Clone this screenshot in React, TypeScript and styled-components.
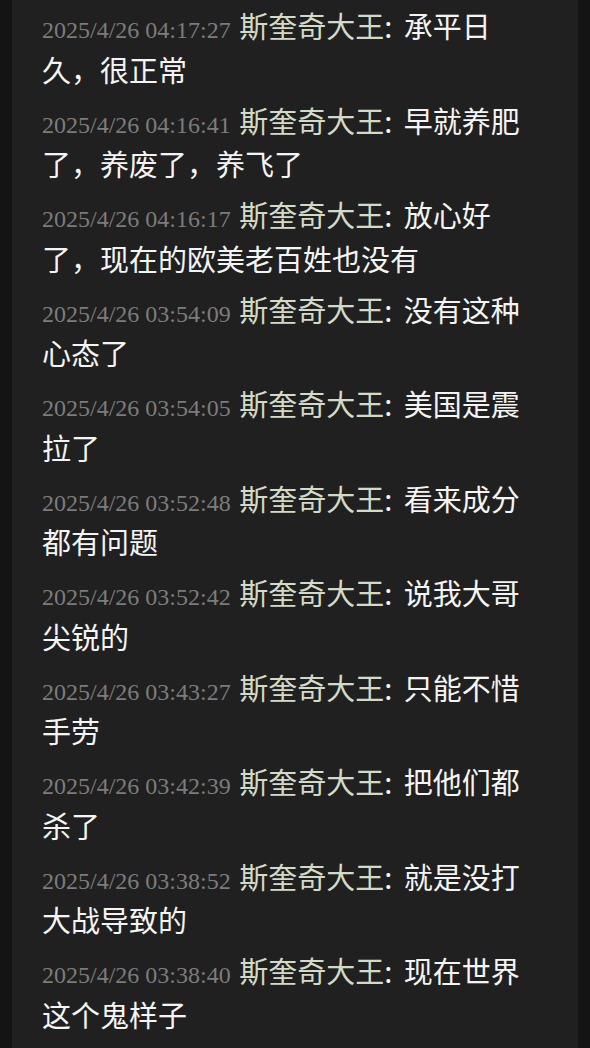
import React from "react";
import styled, { createGlobalStyle } from "styled-components";

const Global = createGlobalStyle`
  html, body { margin: 0; padding: 0; background: #141414; }
  body { overflow: hidden; }
`;

const Page = styled.div`
  display: flex;
  justify-content: center;
  min-height: 1048px;
  background: #141414;
`;

const Panel = styled.div`
  width: 566px;
  box-sizing: border-box;
  background: #202020;
  padding: 4px 38px 0 30px;
  display: flex;
  flex-direction: column;
  gap: 7.5px;
`;

const Entry = styled.div`
  font-family: "Noto Sans CJK SC", "Noto Sans", sans-serif;
  font-size: 29px;
  line-height: 43.5px;
  color: #f4f4f4;
  line-break: strict;
`;

const Time = styled.span`
  font-family: "Liberation Serif", serif;
  font-size: 24px;
  line-height: 1;
  color: #7c7c7c;
`;

const Name = styled.span`
  margin-left: 2px;
  color: #d3dac6;
`;

const Colon = styled.span`
  color: #f4f4f4;
`;

const Msg = styled.span`
  margin-left: 5px;
  color: #f4f4f4;
`;

const rows: [string, string][] = [
  ["2025/4/26 04:17:27", "承平日久，很正常"],
  ["2025/4/26 04:16:41", "早就养肥了，养废了，养飞了"],
  ["2025/4/26 04:16:17", "放心好了，现在的欧美老百姓也没有"],
  ["2025/4/26 03:54:09", "没有这种心态了"],
  ["2025/4/26 03:54:05", "美国是震拉了"],
  ["2025/4/26 03:52:48", "看来成分都有问题"],
  ["2025/4/26 03:52:42", "说我大哥尖锐的"],
  ["2025/4/26 03:43:27", "只能不惜手劳"],
  ["2025/4/26 03:42:39", "把他们都杀了"],
  ["2025/4/26 03:38:52", "就是没打大战导致的"],
  ["2025/4/26 03:38:40", "现在世界这个鬼样子"],
];

export default function App() {
  return (
    <>
      <Global />
      <Page>
        <Panel>
          {rows.map(([t, m]) => (
            <Entry key={t}>
              <Time>{t}</Time> <Name>斯奎奇大王</Name>
              <Colon>:</Colon> <Msg>{m}</Msg>
            </Entry>
          ))}
        </Panel>
      </Page>
    </>
  );
}
